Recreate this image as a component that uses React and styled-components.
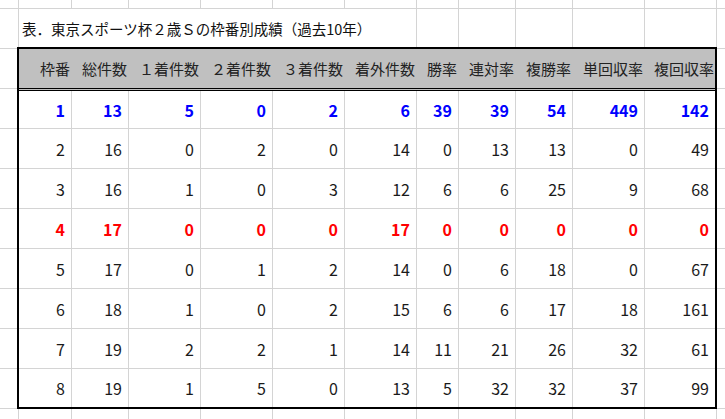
import React from 'react';
import styled, { createGlobalStyle } from 'styled-components';

const GlobalStyle = createGlobalStyle`
  html, body {
    margin: 0;
    padding: 0;
    background: #fff;
  }
  body {
    font-family: "Noto Sans CJK JP", "Noto Sans", sans-serif;
    color: #000;
  }
`;

const gridLine = '#d4d4d4';
const sheetCols = [18, 53, 57, 72, 72, 72, 72, 42, 57, 57, 72, 72];
const tableCols = [52, 57, 72, 72, 72, 72, 42, 57, 57, 72];

const tones = { plain: '#1a1a1a', blue: '#0000ff', red: '#ff0000' };

const headers = ['枠番', '総件数', '１着件数', '２着件数', '３着件数', '着外件数', '勝率', '連対率', '複勝率', '単回収率', '複回収率'];

const rows = [
  { tone: 'blue', values: [1, 13, 5, 0, 2, 6, 39, 39, 54, 449, 142] },
  { tone: 'plain', values: [2, 16, 0, 2, 0, 14, 0, 13, 13, 0, 49] },
  { tone: 'plain', values: [3, 16, 1, 0, 3, 12, 6, 6, 25, 9, 68] },
  { tone: 'red', values: [4, 17, 0, 0, 0, 17, 0, 0, 0, 0, 0] },
  { tone: 'plain', values: [5, 17, 0, 1, 2, 14, 0, 6, 18, 0, 67] },
  { tone: 'plain', values: [6, 18, 1, 0, 2, 15, 6, 6, 17, 18, 161] },
  { tone: 'plain', values: [7, 19, 2, 2, 1, 14, 11, 21, 26, 32, 61] },
  { tone: 'plain', values: [8, 19, 1, 5, 0, 13, 5, 32, 32, 37, 99] },
];

const Sheet = styled.div`
  display: grid;
  grid-template-columns: ${sheetCols.map((w) => `${w}px`).join(' ')} 1fr;
  grid-template-rows: 8px 40px repeat(9, 40px) 1fr;
  width: 725px;
  height: 419px;
  overflow: hidden;
  background: #fff;
`;

const GridCell = styled.div`
  box-sizing: border-box;
  border-left: ${(p) => (p.$edge ? 'none' : `1px solid ${gridLine}`)};
  border-top: ${(p) => (p.$top ? 'none' : `1px solid ${gridLine}`)};
`;

const TitleCell = styled(GridCell)`
  grid-column: span 6;
  display: flex;
  align-items: center;
  padding-left: 3px;
  font-size: 14.5px;
  white-space: nowrap;
  color: #111;
`;

const Table = styled.div`
  grid-column: 2 / 13;
  grid-row: 3 / 12;
  margin: -1px;
  border: 2px solid #000;
  background: #fff;
  display: grid;
  grid-template-rows: 42px 37px repeat(6, 40px) 1fr;
  position: relative;
  z-index: 1;
`;

const Row = styled.div`
  display: grid;
  grid-template-columns: ${tableCols.map((w) => `${w}px`).join(' ')} 1fr;
  box-sizing: border-box;
`;

const HeaderRow = styled(Row)`
  background: #c0c0c0;
  border-bottom: 3px double #000;
`;

const HeadCell = styled.div`
  display: flex;
  align-items: center;
  justify-content: flex-end;
  padding-right: 1px;
  font-size: 15px;
  color: #222;
  white-space: nowrap;
`;

const DataRow = styled(Row)`
  border-top: ${(p) => (p.$first ? 'none' : `1px solid ${gridLine}`)};
  color: ${(p) => tones[p.$tone]};
  font-weight: ${(p) => (p.$tone === 'plain' ? 400 : 700)};
`;

const NumCell = styled.div`
  display: flex;
  align-items: center;
  justify-content: flex-end;
  padding-right: 6px;
  font-size: 16px;
  border-left: ${(p) => (p.$edge ? 'none' : `1px solid ${gridLine}`)};
`;

const blankRow = (key, opts = {}) =>
  sheetCols.concat([0]).map((_, i) => <GridCell key={`${key}-${i}`} $edge={i === 0} {...opts} />);

export default function App() {
  return (
    <>
      <GlobalStyle />
      <Sheet>
        {blankRow('top', { $top: true })}

        <GridCell $edge />
        <TitleCell>表．東京スポーツ杯２歳Ｓの枠番別成績（過去10年）</TitleCell>
        {[0, 1, 2, 3, 4, 5].map((i) => (
          <GridCell key={`title-${i}`} />
        ))}

        <Table>
          <HeaderRow>
            {headers.map((h) => (
              <HeadCell key={h}>{h}</HeadCell>
            ))}
          </HeaderRow>
          {rows.map((row, r) => (
            <DataRow key={r} $first={r === 0} $tone={row.tone}>
              {row.values.map((v, i) => (
                <NumCell key={i} $edge={i === 0}>{v}</NumCell>
              ))}
            </DataRow>
          ))}
        </Table>

        {Array.from({ length: 9 }).map((_, i) => (
          <React.Fragment key={`side-${i}`}>
            <GridCell $edge />
            <GridCell />
          </React.Fragment>
        ))}

        {blankRow('bottom')}
      </Sheet>
    </>
  );
}
